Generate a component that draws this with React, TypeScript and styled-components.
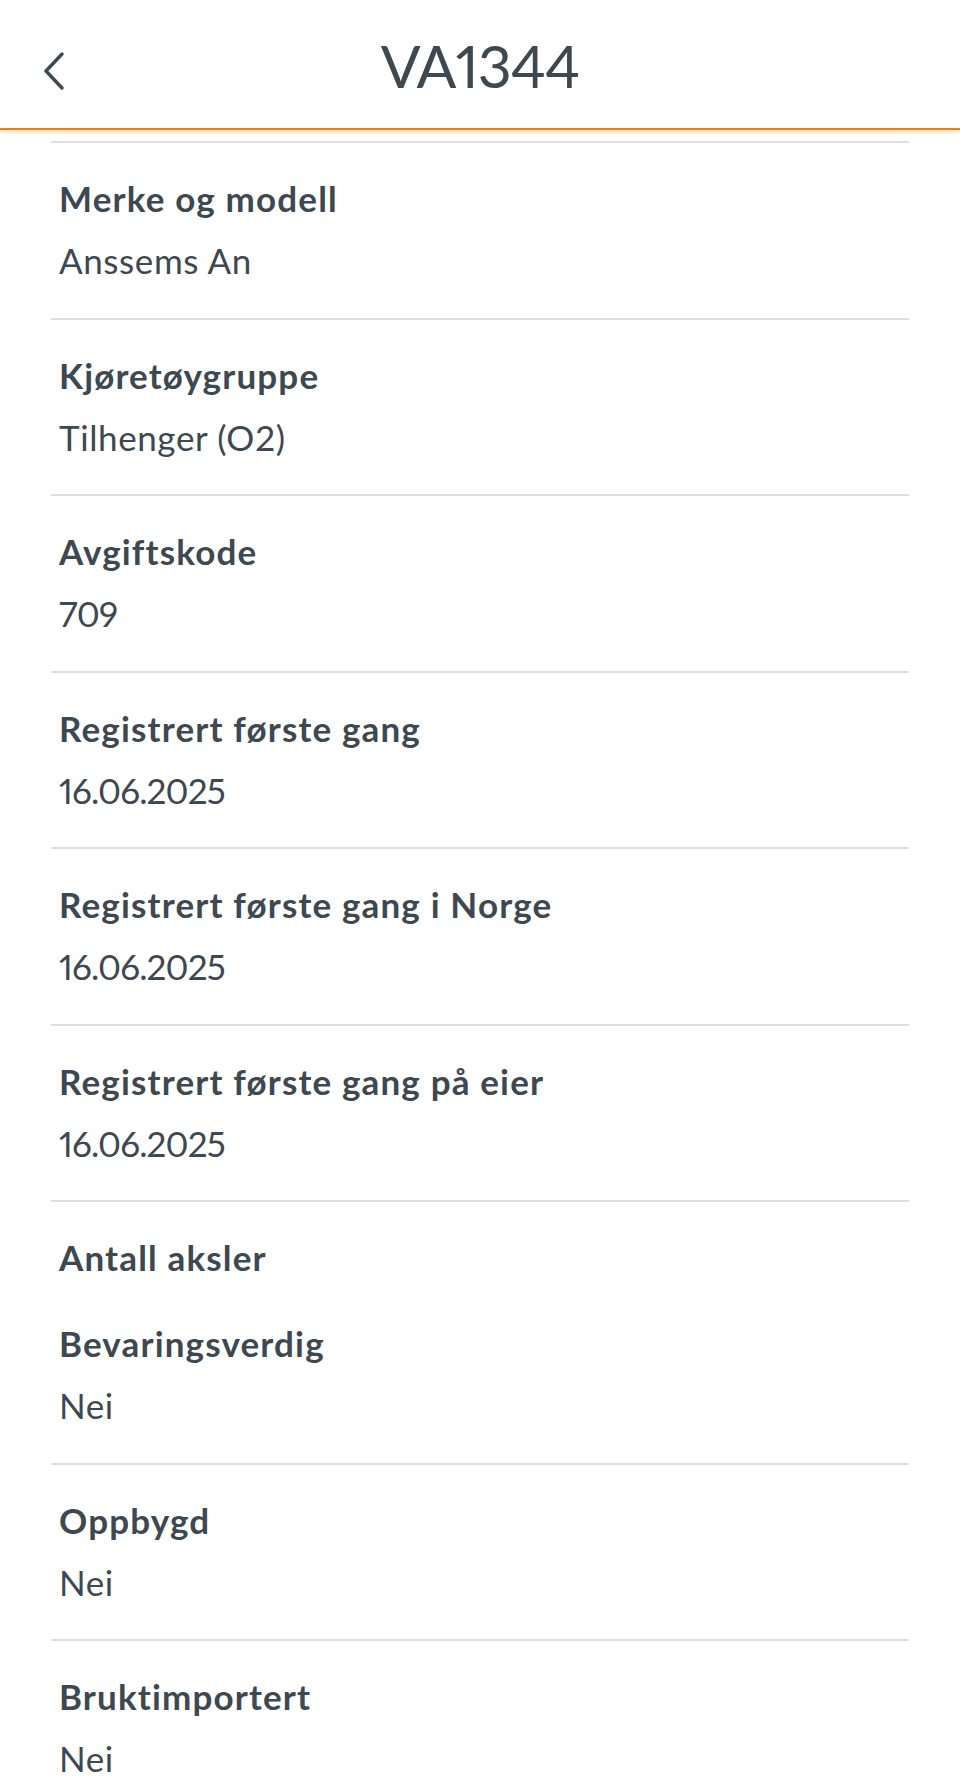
import styled, { createGlobalStyle } from 'styled-components';

const GlobalStyle = createGlobalStyle`
  html, body {
    margin: 0;
    padding: 0;
    background: #ffffff;
  }
  body {
    font-family: Lato, "Open Sans", "Noto Sans", sans-serif;
    color: #3d4850;
    -webkit-font-smoothing: antialiased;
  }
`;

type Field = { label: string; value?: string };

const SECTIONS: Field[][] = [
  [{ label: 'Merke og modell', value: 'Anssems An' }],
  [{ label: 'Kjøretøygruppe', value: 'Tilhenger (O2)' }],
  [{ label: 'Avgiftskode', value: '709' }],
  [{ label: 'Registrert første gang', value: '16.06.2025' }],
  [{ label: 'Registrert første gang i Norge', value: '16.06.2025' }],
  [{ label: 'Registrert første gang på eier', value: '16.06.2025' }],
  [{ label: 'Antall aksler' }, { label: 'Bevaringsverdig', value: 'Nei' }],
  [{ label: 'Oppbygd', value: 'Nei' }],
  [{ label: 'Bruktimportert', value: 'Nei' }],
];

const isNumeric = (v: string) => /^[\d.]+$/.test(v);

export default function App() {
  return (
    <>
      <GlobalStyle />
      <Page>
        <Header>
          <BackButton aria-label="Tilbake">
            <svg width="24" height="38" viewBox="0 0 24 38" fill="none">
              <path
                d="M19 2 L3 19 L19 36"
                stroke="#3d4850"
                strokeWidth="3.4"
                strokeLinecap="round"
                strokeLinejoin="round"
              />
            </svg>
          </BackButton>
          <Title>VA1344</Title>
        </Header>

        <List>
          {SECTIONS.map((fields, i) => (
            <Section key={i}>
              {fields.map((f) => (
                <FieldBlock key={f.label}>
                  <Label>{f.label}</Label>
                  {f.value && <Value $numeric={isNumeric(f.value)}>{f.value}</Value>}
                </FieldBlock>
              ))}
            </Section>
          ))}
        </List>
      </Page>
    </>
  );
}

const Page = styled.div`
  width: 960px;
  min-height: 1784px;
  background: #ffffff;
`;

const Header = styled.header`
  position: relative;
  height: 128px;
  display: flex;
  align-items: center;
  justify-content: center;
  border-bottom: 2px solid #e4821c;
  box-shadow: 0 2px 5px rgba(245, 165, 70, 0.45);
`;

const BackButton = styled.button`
  position: absolute;
  left: 43px;
  top: 52px;
  padding: 0;
  border: none;
  background: none;
  display: flex;
  cursor: pointer;
`;

const Title = styled.h1`
  margin: 0;
  margin-top: 2px;
  font-family: Lato, "Open Sans", sans-serif;
  font-weight: 400;
  font-size: 59px;
  letter-spacing: -1px;
  font-variant-numeric: proportional-nums;
  color: #3d4850;
`;

const List = styled.div`
  margin: 0 51px;
  padding-top: 11px;
`;

const Section = styled.div`
  display: flex;
  flex-direction: column;
  gap: 24px;
  padding: 24px 8px 26.5px;
  border-top: 2px solid #dedede;
`;

const FieldBlock = styled.div`
  display: flex;
  flex-direction: column;
`;

const Label = styled.div`
  font-size: 35px;
  line-height: 62px;
  font-weight: 700;
  letter-spacing: 1.15px;
`;

const Value = styled.div<{ $numeric?: boolean }>`
  font-size: 35px;
  line-height: 62px;
  font-weight: 400;
  letter-spacing: ${(p) => (p.$numeric ? '-0.85px' : '0.6px')};
  font-variant-numeric: ${(p) => (p.$numeric ? 'proportional-nums' : 'normal')};
`;
